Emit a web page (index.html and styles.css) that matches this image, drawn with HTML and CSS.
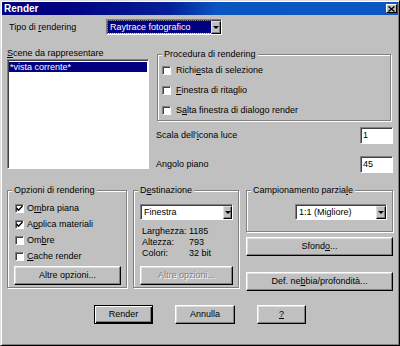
FILE: index.html
```html
<!DOCTYPE html>
<html>
<head>
<meta charset="UTF-8">
<title>Render</title>
<link rel="stylesheet" href="styles.css">
</head>
<body>
<div class="window">
    <div class="titlebar">
        <span class="title">Render</span>
        <span class="close"><svg width="7" height="6" viewBox="0 0 7 6"><path d="M0.5 0.5 L6.5 5.5 M6.5 0.5 L0.5 5.5" stroke="#000" stroke-width="1.4"/></svg></span>
    </div>
    <div class="content">
        <div class="top-row">
            <span class="tipo-label">Tipo di <u>r</u>endering</span>
            <div class="combo combo-tipo">
                <span class="combo-text focused">Raytrace fotografico</span>
                <span class="combo-btn"><i class="arrow"></i></span>
            </div>
        </div>

        <div class="main-row">
            <div class="scene-col">
                <div class="scene-label"><u>S</u>cene da rappresentare</div>
                <div class="listbox">
                    <div class="list-item selected">*vista corrente*</div>
                </div>
            </div>
            <div class="proc-col">
                <div class="group group-proc">
                    <span class="group-title">Procedura di rendering</span>
                    <div class="check"><span class="box"></span><span>Richi<u>e</u>sta di selezione</span></div>
                    <div class="check"><span class="box"></span><span><u>F</u>inestra di ritaglio</span></div>
                    <div class="check"><span class="box"></span><span>S<u>a</u>lta finestra di dialogo render</span></div>
                </div>
                <div class="field-row field-scala">
                    <span>Scala dell'<u>i</u>cona luce</span>
                    <span class="input">1</span>
                </div>
                <div class="field-row field-angolo">
                    <span>Angolo piano</span>
                    <span class="input">45</span>
                </div>
            </div>
        </div>

        <div class="lower-row">
            <div class="group group-opzioni">
                <span class="group-title">Opzioni di rendering</span>
                <div class="check"><span class="box checked"><svg width="7" height="7" viewBox="0 0 7 7"><path d="M0.5 3 L2.5 5.2 L6.5 1" stroke="#000" stroke-width="1.4" fill="none"/></svg></span><span>O<u>m</u>bra piana</span></div>
                <div class="check"><span class="box checked"><svg width="7" height="7" viewBox="0 0 7 7"><path d="M0.5 3 L2.5 5.2 L6.5 1" stroke="#000" stroke-width="1.4" fill="none"/></svg></span><span>A<u>p</u>plica materiali</span></div>
                <div class="check"><span class="box"></span><span>Om<u>b</u>re</span></div>
                <div class="check"><span class="box"></span><span><u>C</u>ache render</span></div>
                <div class="btn btn-altre">Altre opzioni...</div>
            </div>
            <div class="group group-dest">
                <span class="group-title">D<u>e</u>stinazione</span>
                <div class="combo combo-dest">
                    <span class="combo-text">Finestra</span>
                    <span class="combo-btn"><i class="arrow"></i></span>
                </div>
                <div class="info">
                    <div class="info-line"><span class="info-key">Larghezza:</span>1185</div>
                    <div class="info-line"><span class="info-key">Altezza:</span>793</div>
                    <div class="info-line"><span class="info-key">Colori:</span>32 bit</div>
                </div>
                <div class="btn btn-disabled">Altre opzioni...</div>
            </div>
            <div class="side-col">
                <div class="group group-camp">
                    <span class="group-title">Campionamento parzia<u>l</u>e</span>
                    <div class="combo combo-camp">
                        <span class="combo-text">1:1 (Migliore)</span>
                        <span class="combo-btn"><i class="arrow"></i></span>
                    </div>
                </div>
                <div class="btn btn-sfondo"><span>Sfond<u>o</u>...</span></div>
                <div class="btn btn-nebbia"><span>Def. ne<u>b</u>bia/profondità...</span></div>
            </div>
        </div>

        <div class="button-row">
            <div class="btn btn-default btn-render">Render</div>
            <div class="btn btn-annulla">Annulla</div>
            <div class="btn btn-help"><u>?</u></div>
        </div>
    </div>
</div>
</body>
</html>
```

FILE: styles.css
```css
*{
    box-sizing:border-box;
}
body{
    margin:0;
    background:#c0c0c0;
    color:#000;
    font-family:"Liberation Sans", Arial, sans-serif;
    font-size:9px;
    line-height:11px;
}
u{
    text-decoration:underline;
    text-underline-offset:1px;
}

/* window frame */
.window{
    width:400px;
    height:346px;
    padding:1px;
    border:1px solid;
    border-color:#dfdfdf #000 #000 #dfdfdf;
    box-shadow:inset 1px 1px #fff, inset -1px -1px #808080;
    background:#c0c0c0;
}
.titlebar{
    height:13px;
    display:flex;
    align-items:center;
    justify-content:space-between;
    padding-left:2px;
    background:linear-gradient(90deg, #000080 15%, #041e96 42%, #0a54c0 54%, #0a58c4 100%);
}
.title{
    color:#fff;
    font-weight:bold;
    font-size:10px;
}
.close{
    width:11px;
    height:9px;
    margin-right:1px;
    display:flex;
    align-items:center;
    justify-content:center;
    background:#c0c0c0;
    border:1px solid;
    border-color:#fff #000 #000 #fff;
}

.content{
    padding:0 5px;
}

/* common controls */
.group{
    position:relative;
    border:1px solid #808080;
    box-shadow:inset 1px 1px #fff, 1px 1px #fff;
}
.group-title{
    position:absolute;
    top:-6px;
    left:4px;
    padding:0 2px;
    background:#c0c0c0;
    white-space:nowrap;
}
.check{
    display:flex;
    align-items:center;
    gap:5px;
    white-space:nowrap;
}
.box{
    width:9px;
    height:9px;
    flex:none;
    display:flex;
    align-items:center;
    justify-content:center;
    background:#fff;
    border:1px solid;
    border-color:#808080 #fff #fff #808080;
    box-shadow:inset 1px 1px #404040;
}
.btn{
    height:19px;
    display:flex;
    align-items:center;
    justify-content:center;
    background:#c0c0c0;
    border:1px solid;
    border-color:#fff #000 #000 #fff;
    box-shadow:inset -1px -1px #808080, inset 1px 1px #dfdfdf;
    white-space:nowrap;
}
.btn-disabled{
    color:#808080;
    text-shadow:1px 1px #fff;
}
.btn-default{
    border:1px solid #000;
    box-shadow:inset 1px 1px #fff, inset -1px -1px #000, inset -2px -2px #808080;
}
.combo{
    height:16px;
    display:flex;
    background:#fff;
    border:1px solid;
    border-color:#808080 #fff #fff #808080;
    box-shadow:inset 1px 1px #404040;
}
.combo-text{
    flex:1;
    display:flex;
    align-items:center;
    padding-left:3px;
    white-space:nowrap;
    overflow:hidden;
}
.combo-text.focused{
    margin:1px 0 1px 1px;
    background:#000080;
    color:#fff;
    padding-left:2px;
    outline:1px dotted #808080;
}
.combo-btn{
    width:10px;
    flex:none;
    display:flex;
    align-items:center;
    justify-content:center;
    margin:1px 0 0 0;
    background:#c0c0c0;
    border:1px solid;
    border-color:#dfdfdf #000 #000 #dfdfdf;
    box-shadow:inset -1px -1px #808080;
}
.arrow{
    width:0;
    height:0;
    border-left:3px solid transparent;
    border-right:3px solid transparent;
    border-top:3px solid #000;
}
.input{
    height:17px;
    width:33px;
    display:flex;
    align-items:center;
    padding-left:2px;
    background:#fff;
    border:1px solid;
    border-color:#808080 #fff #fff #808080;
    box-shadow:inset 1px 1px #404040;
}

/* top row */
.top-row{
    margin-top:4px;
    height:16px;
    display:flex;
    align-items:center;
}
.tipo-label{
    width:99px;
    padding-left:2px;
}
.combo-tipo{
    width:116px;
}

/* scene list + procedure */
.main-row{
    margin-top:13px;
    display:flex;
    gap:6px;
}
.scene-col{
    width:142px;
}
.listbox{
    height:110px;
    padding:2px 1px;
    background:#fff;
    border:1px solid;
    border-color:#808080 #fff #fff #808080;
    box-shadow:inset 1px 1px #404040;
}
.list-item{
    height:10px;
    line-height:10px;
    padding-left:1px;
}
.list-item.selected{
    background:#000080;
    color:#fff;
}
.proc-col{
    flex:1;
}
.group-proc{
    margin:6px 2px 0 2px;
    height:67px;
    padding:5px 0 0 4px;
}
.group-proc .check{
    height:20px;
}
.field-row{
    display:flex;
    align-items:center;
    justify-content:space-between;
    padding-left:1px;
}
.field-scala{
    margin-top:6px;
}
.field-angolo{
    margin-top:12px;
}

/* lower groups */
.lower-row{
    margin-top:17px;
    display:flex;
}
.group-opzioni{
    width:120px;
    height:98px;
    padding:9px 0 0 7px;
}
.group-opzioni .check{
    height:16px;
    gap:3px;
}
.btn-altre{
    width:107px;
    margin:2px 0 0 -1px;
}
.group-dest{
    width:106px;
    height:98px;
    margin-left:6px;
    padding:13px 0 0 6px;
}
.combo-dest{
    width:93px;
}
.combo-dest .combo-btn{
    width:9px;
}
.info{
    margin-top:6px;
    padding-left:2px;
}
.info-key{
    display:inline-block;
    width:47px;
}
.btn-disabled{
    width:93px;
    margin-top:7px;
}
.side-col{
    width:147px;
    margin-left:7px;
}
.group-camp{
    height:42px;
    display:flex;
    justify-content:flex-end;
    align-items:flex-start;
    padding:13px 5px 0 0;
}
.combo-camp{
    width:92px;
}
.btn-sfondo{
    margin-top:5px;
}
.btn-nebbia{
    margin-top:16px;
}

/* dialog buttons */
.button-row{
    margin-top:14px;
    display:flex;
    justify-content:center;
    gap:22px;
}
.btn-render{
    width:59px;
}
.btn-annulla{
    width:60px;
}
.btn-help{
    width:49px;
}
```
